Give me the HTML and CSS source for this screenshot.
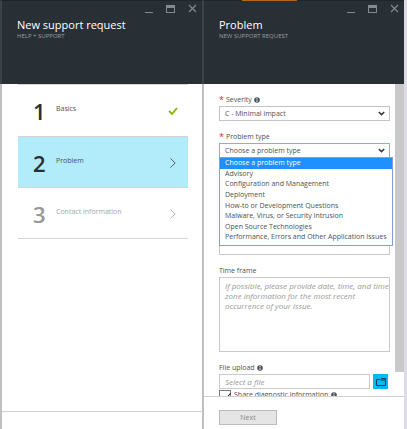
FILE: index.html
```html
<!DOCTYPE html>
<html lang="en">
<head>
<meta charset="utf-8">
<title>New support request</title>
<link rel="stylesheet" href="styles.css">
</head>
<body>
<svg class="defs" aria-hidden="true">
  <symbol id="controls" viewBox="0 0 52 10"><path d="M0 8.5h8" stroke="#858a8c" stroke-width="1"/><path d="M21 1h9v8h-9z" fill="#858a8c"/><path d="M22 4h7v4h-7z" fill="#293035"/><path d="M44 1l7 7M51 1l-7 7" stroke="#858a8c" stroke-width="1.2"/></symbol>
  <symbol id="info" viewBox="0 0 6 6"><circle cx="3" cy="3" r="2.8" fill="#4c5155"/><path d="M3 1v1M3 2.5v2.5" stroke="#fff" stroke-width=".9"/></symbol>
  <symbol id="next" viewBox="0 0 6 10"><path d="M.5.5L5.2 5 .5 9.500" fill="none" stroke="currentColor" stroke-width=".9"/></symbol>
  <symbol id="down" viewBox="0 0 7 5"><path d="M.8 1l2.700 2.600L6.200 1" fill="none" stroke="#30363a" stroke-width="1.500"/></symbol>
</svg>
<main class="blades">
  <section class="blade steps-blade">
    <header class="head">
      <svg class="controls"><use href="#controls"/></svg>
      <h1>New support request</h1>
      <p>Help + support</p>
    </header>
    <div class="content">
      <ol class="steps">
        <li class="step"><b>1</b><span>Basics</span><svg class="check" viewBox="0 0 10 8"><path d="M1 4l3 3 5-6" fill="none" stroke="#7fba00" stroke-width="1.800"/></svg></li>
        <li class="step current"><b>2</b><span>Problem</span><svg class="arrow"><use href="#next"/></svg></li>
        <li class="step pending"><b>3</b><span>Contact information</span><svg class="arrow"><use href="#next"/></svg></li>
      </ol>
    </div>
    <footer class="foot"></footer>
  </section>
  <section class="blade problem-blade">
    <header class="head">
      <svg class="controls"><use href="#controls"/></svg>
      <h1>Problem</h1>
      <p>New support request</p>
    </header>
    <div class="content scroller">
      <form class="form" id="problem">
        <label class="label required" for="severity"><i>*</i>Severity<svg class="info"><use href="#info"/></svg></label>
        <div class="picker"><select id="severity"><option>C - Minimal impact</option></select><svg class="down"><use href="#down"/></svg></div>
        <label class="label required" for="type"><i>*</i>Problem type</label>
        <div class="picker open">
          <select id="type"><option>Choose a problem type</option></select><svg class="down"><use href="#down"/></svg>
          <ul class="menu" role="listbox" aria-label="Problem type">
            <li role="option" aria-selected="true">Choose a problem type</li>
            <li role="option">Advisory</li>
            <li role="option">Configuration and Management</li>
            <li role="option">Deployment</li>
            <li role="option">How-to or Development Questions</li>
            <li role="option">Malware, Virus, or Security Intrusion</li>
            <li role="option">Open Source Technologies</li>
            <li role="option">Performance, Errors and Other Application Issues</li>
          </ul>
        </div>
        <textarea class="details" aria-label="Details"></textarea>
        <label class="label" for="time">Time frame</label>
        <textarea id="time" placeholder="If possible, please provide date, time, and time zone information for the most recent occurrence of your issue."></textarea>
        <label class="label" for="file">File upload<svg class="info"><use href="#info"/></svg></label>
        <div class="upload">
          <input id="file" type="text" placeholder="Select a file">
          <button type="button" aria-label="Browse"><svg viewBox="0 0 10 8"><path d="M.5 1.500h4l1-1h4v7h-9zM5 2h4.500" fill="none" stroke="#123c4c"/></svg></button>
        </div>
        <label class="share"><input type="checkbox" checked><span>Share diagnostic information</span><svg class="info"><use href="#info"/></svg></label>
      </form>
      <div class="track"></div>
    </div>
    <footer class="foot"><button class="submit" form="problem" disabled>Next</button></footer>
  </section>
</main>
</body>
</html>
```
FILE: styles.css
```css
* { box-sizing: border-box; }
body {
  margin: 0;
  background: #dcdbe6;
  color: #4c5155;
  font: 7px/10px "Open Sans", "Noto Sans", sans-serif;
}
h1, p, ol, ul { margin: 0; padding: 0; font-weight: 400; list-style: none; }
input, select, textarea, button { margin: 0; font: inherit; color: inherit; border-radius: 0; }
svg { display: block; flex: none; }
.defs { position: absolute; width: 0; height: 0; }

.blades {
  display: grid;
  grid-template-columns: 1fr 1fr;
  height: 100vh;
  padding-right: 3px;
}
.blade {
  display: flex;
  flex-direction: column;
  min-width: 0;
  min-height: 0;
  background: #fff;
  border-left: 2px solid #c0c0c0;
}

.head {
  height: 84px;
  flex: none;
  margin-left: -2px;
  padding: 3px 5px 0 15px;
  background: #293035;
  border-left: 2px solid #3d4448;
  border-top: 1px solid #202529;
  color: #fff;
}
.problem-blade .head {
  border-top-color: transparent;
  background: linear-gradient(90deg, #202529 20%, #b06a14 20% 47%, #202529 47%) border-box top / 100% 1px no-repeat, #293035;
}
.controls { width: 52px; height: 10px; margin-left: auto; }
.head h1 { margin-top: 3px; font-size: 11px; line-height: 15px; }
.head p { color: #9a9ea1; text-transform: uppercase; font-size: 6px; line-height: 9px; }

.content { flex: 1; min-height: 0; overflow: hidden; }
.steps-blade .content { padding: 0 14px 0 16px; }
.step {
  display: flex;
  height: 51px;
  padding: 18px 10px 0 15px;
  border-top: 1px solid #d4d4d4;
}
.step:first-child, .step:last-child { height: 52px; }
.step:last-child { border-bottom: 1px solid #d4d4d4; }
.step b { width: 23px; font-size: 22px; line-height: 16px; font-weight: 600; color: #293035; }
.step span { flex: 1; line-height: 12px; }
.current { background: #b2ebfa; }
.pending { color: #a5a8aa; }
.step.pending b { color: #94989a; }
.arrow { width: 6px; height: 10px; margin: 3px 2px 0 0; }
.check { width: 10px; height: 8px; margin-top: 4px; }

.scroller { display: flex; }
.form { flex: 1; min-width: 0; padding: 9px 5px 0 15px; }
.track { width: 9px; height: 288px; background: #c9c9c9; }
.label { display: flex; align-items: center; gap: 2px; height: 13px; }
.required i { width: 5px; color: #e3262e; font-size: 9px; font-style: normal; }
.info { width: 6px; height: 6px; }
.picker { position: relative; display: grid; margin-bottom: 9px; }
.picker select {
  grid-area: 1 / 1;
  width: 100%;
  height: 15px;
  padding: 0 5px;
  appearance: none;
  background: #fff;
  border: 1px solid #c3c3c3;
  outline: 0;
}
.down { grid-area: 1 / 1; place-self: center end; width: 7px; height: 5px; margin-right: 5px; }
.open select { border-color: #59c4e8; }
.menu {
  position: absolute;
  top: 14px;
  left: 0;
  right: -3px;
  display: grid;
  grid-auto-rows: 1fr;
  height: 89px;
  padding-bottom: 2px;
  background: #fff;
  border: 1px solid #7f9fd6;
  white-space: nowrap;
}
.menu li { padding-left: 5px; }
.menu [aria-selected] { background: #1e90ff; color: #fff; }
textarea {
  display: block;
  width: 100%;
  height: 75px;
  padding: 3px 0 3px 5px;
  resize: none;
  border: 1px solid #c9c9c9;
}
.details { margin: 22px 0 9px; }
#time { margin-bottom: 9px; }
#time, #file { font-size: 8px; }
::placeholder { color: #999; font-style: italic; opacity: 1; }
.upload { display: flex; gap: 3px; padding-right: 2px; }
.upload input { flex: 1; min-width: 0; height: 15px; padding: 0 5px; border: 1px solid #c9c9c9; }
.upload button {
  display: grid;
  place-items: center;
  width: 15px;
  height: 15px;
  padding: 0;
  border: 0;
  background: #00b9f2;
}
.upload svg { width: 10px; height: 8px; }
.share { display: flex; gap: 3px; padding-top: 1px; }
.share input {
  appearance: none;
  width: 12px;
  height: 12px;
  border: 1px solid #777;
}
.share input:checked::after {
  content: "";
  display: block;
  width: 4px;
  height: 7px;
  margin: 0 0 0 4px;
  border: solid #222;
  border-width: 0 1px 1px 0;
  transform: rotate(40deg);
}
.share .info { margin-top: 2px; }

.foot { flex: none; height: 18px; border-top: 1px solid #d0d0d0; background: #fff; }
.problem-blade .foot { height: 33px; padding: 13px 15px 0; }
.submit {
  display: block;
  width: 58px;
  height: 15px;
  padding: 0;
  background: #e5e5e5;
  border: 1px solid #bcbcbc;
  color: #888;
}
```
